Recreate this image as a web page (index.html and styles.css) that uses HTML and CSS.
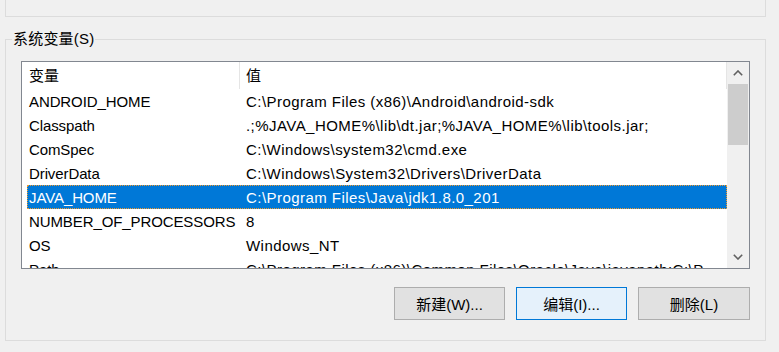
FILE: index.html
```html
<!DOCTYPE html>
<html lang="zh-CN">
<head>
    <meta charset="UTF-8">
    <title>环境变量</title>
    <link rel="stylesheet" href="styles.css">
</head>
<body>
    <div class="top-group"></div>

    <div class="group">
        <span class="group-label">系统变量(S)</span>

        <div class="list">
            <div class="list-body">
                <div class="list-header">
                    <div class="head-cell head-name">变量</div>
                    <div class="head-cell head-value">值</div>
                </div>
                <div class="row">
                    <div class="cell name">ANDROID_HOME</div>
                    <div class="cell value">C:\Program Files (x86)\Android\android-sdk</div>
                </div>
                <div class="row">
                    <div class="cell name">Classpath</div>
                    <div class="cell value">.;%JAVA_HOME%\lib\dt.jar;%JAVA_HOME%\lib\tools.jar;</div>
                </div>
                <div class="row">
                    <div class="cell name">ComSpec</div>
                    <div class="cell value">C:\Windows\system32\cmd.exe</div>
                </div>
                <div class="row">
                    <div class="cell name">DriverData</div>
                    <div class="cell value">C:\Windows\System32\Drivers\DriverData</div>
                </div>
                <div class="row selected">
                    <div class="cell name">JAVA_HOME</div>
                    <div class="cell value">C:\Program Files\Java\jdk1.8.0_201</div>
                </div>
                <div class="row">
                    <div class="cell name">NUMBER_OF_PROCESSORS</div>
                    <div class="cell value">8</div>
                </div>
                <div class="row">
                    <div class="cell name">OS</div>
                    <div class="cell value">Windows_NT</div>
                </div>
                <div class="row">
                    <div class="cell name">Path</div>
                    <div class="cell value">C:\Program Files (x86)\Common Files\Oracle\Java\javapath;C:\Program Files\Git\cmd</div>
                </div>
            </div>

            <div class="scrollbar">
                <div class="scroll-btn">
                    <svg width="10" height="6" viewBox="0 0 10 6"><polyline points="0.8,5.2 5,1 9.2,5.2" fill="none" stroke="#606060" stroke-width="1.6"/></svg>
                </div>
                <div class="scroll-track">
                    <div class="scroll-thumb"></div>
                </div>
                <div class="scroll-btn">
                    <svg width="10" height="6" viewBox="0 0 10 6"><polyline points="0.8,0.8 5,5 9.2,0.8" fill="none" stroke="#606060" stroke-width="1.6"/></svg>
                </div>
            </div>
        </div>

        <div class="actions">
            <button class="btn">新建(W)...</button>
            <button class="btn btn-default">编辑(I)...</button>
            <button class="btn">删除(L)</button>
        </div>
    </div>
</body>
</html>
```

FILE: styles.css
```css
* {
    margin: 0;
    padding: 0;
    box-sizing: border-box;
}

body {
    font-family: "Liberation Sans", "Noto Sans CJK SC", sans-serif;
    font-size: 15px;
    color: #000;
    background: #f0f0f0;
    width: 779px;
    height: 352px;
    overflow: hidden;
}

/* the group box above, only its bottom edge is visible */
.top-group {
    margin-left: 5px;
    width: 761px;
    height: 17px;
    border: 1px solid #dcdcdc;
    border-top: none;
}

.group {
    position: relative;
    margin: 22px 0 0 5px;
    width: 761px;
    height: 302px;
    border: 1px solid #dcdcdc;
    padding: 21px 15px 0 15px;
}

.group-label {
    position: absolute;
    top: -10px;
    left: 6px;
    padding: 0 1px;
    line-height: 18px;
    background: #f0f0f0;
    letter-spacing: 0.2px;
}

.list {
    display: flex;
    height: 208px;
    border: 1px solid #828790;
    background: #fff;
}

.list-body {
    width: 705px;
    overflow: hidden;
}

.list-header {
    display: flex;
    height: 27px;
    border-right: 1px solid #e5e5e5;
}

.head-cell {
    line-height: 27px;
    white-space: nowrap;
}

.head-name {
    width: 218px;
    padding-left: 7px;
    border-right: 1px solid #e5e5e5;
}

.head-value {
    padding-left: 6px;
}

.row {
    display: grid;
    grid-template-columns: 212px 1fr;
    margin-left: 5px;
    width: 700px;
    height: 24px;
}

.cell {
    padding-top: 2px;
    line-height: 22px;
    white-space: nowrap;
    overflow: hidden;
    text-overflow: ellipsis;
}

.name {
    padding-left: 2px;
    letter-spacing: -0.1px;
}

.value {
    padding-left: 7px;
    padding-right: 4px;
    letter-spacing: 0.45px;
}

.row.selected {
    background: #0078d7;
    color: #fff;
    outline: 1px dotted #f39a2c;
    outline-offset: -1px;
}

.scrollbar {
    width: 22px;
    display: flex;
    flex-direction: column;
    background: #f0f0f0;
}

.scroll-btn {
    height: 22px;
    display: flex;
    align-items: center;
    justify-content: center;
}

.scroll-track {
    flex: 1;
}

.scroll-thumb {
    margin: 0 1px;
    height: 61px;
    background: #cdcdcd;
}

.actions {
    display: flex;
    justify-content: flex-end;
    gap: 11px;
    margin-top: 18px;
}

.btn {
    width: 111px;
    height: 33px;
    font-family: "Liberation Sans", "Noto Sans CJK SC", sans-serif;
    font-size: 15px;
    color: #000;
    background: #e1e1e1;
    border: 1px solid #adadad;
}

.btn:last-child {
    width: 112px;
}

.btn-default {
    background: #e5f1fb;
    border-color: #0078d7;
}
```
